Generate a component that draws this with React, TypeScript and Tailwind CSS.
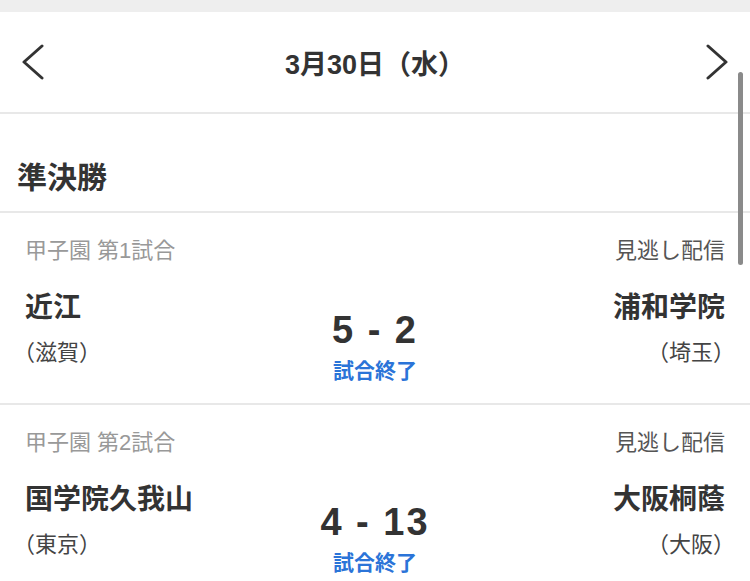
import React from "react";

type Game = {
  label: string;
  home: string;
  homePref: string;
  away: string;
  awayPref: string;
  score: string;
};

const GAMES: Game[] = [
  { label: "甲子園 第1試合", home: "近江", homePref: "（滋賀）", away: "浦和学院", awayPref: "（埼玉）", score: "5 - 2" },
  { label: "甲子園 第2試合", home: "国学院久我山", homePref: "（東京）", away: "大阪桐蔭", awayPref: "（大阪）", score: "4 - 13" },
];

const font = { fontFamily: '"Liberation Sans", "Noto Sans CJK JP", sans-serif' };

const Chevron: React.FC<{ dir: "left" | "right" }> = ({ dir }) => (
  <svg width="24" height="36" viewBox="0 0 24 36" fill="none">
    <polyline
      points={dir === "left" ? "21,2 3,18 21,34" : "3,2 21,18 3,34"}
      stroke="#333"
      strokeWidth="3"
      strokeLinecap="round"
      strokeLinejoin="round"
    />
  </svg>
);

const App: React.FC = () => {
  return (
    <div className="relative w-[750px] h-[581px] overflow-hidden bg-white text-[#333]" style={font}>
      <div className="h-[12px] bg-[#eeeeee]" />

      {/* Date header */}
      <div className="flex items-center justify-between h-[102px] px-[21px] border-b-2 border-[#e8e8e8]">
        <Chevron dir="left" />
        <div className="text-[27px] font-bold pt-[6px]">3月30日（水）</div>
        <Chevron dir="right" />
      </div>

      {/* Section title */}
      <div className="h-[99px] px-[17px] pt-[46px] border-b-2 border-[#e8e8e8]">
        <h2 className="text-[30px] font-bold leading-[36px]">準決勝</h2>
      </div>

      {GAMES.map((g) => (
        <div key={g.label} className="h-[192px] px-[25px] pt-[24px] border-b-2 border-[#e8e8e8]">
          <div className="flex justify-between text-[22px] leading-[28px]">
            <span className="text-[#999]">{g.label}</span>
            <span className="text-[#555]">見逃し配信</span>
          </div>
          <div className="grid grid-cols-3 mt-[25px]">
            <div className="flex flex-col items-start">
              <div className="text-[28px] font-bold leading-[36px]">{g.home}</div>
              <div className="text-[22px] leading-[28px] mt-[13px] -ml-[12px] text-[#444]">{g.homePref}</div>
            </div>
            <div className="flex flex-col items-center mt-[20px]">
              <div className="text-[38px] font-bold leading-[40px] tracking-[2px]">{g.score}</div>
              <div className="text-[21px] font-bold leading-[26px] mt-[8px] text-[#2b74d8]">試合終了</div>
            </div>
            <div className="flex flex-col items-end">
              <div className="text-[28px] font-bold leading-[36px]">{g.away}</div>
              <div className="text-[22px] leading-[28px] mt-[13px] -mr-[10px] text-[#444]">{g.awayPref}</div>
            </div>
          </div>
        </div>
      ))}

      {/* scrollbar overlay */}
      <div className="absolute right-[7px] top-[72px] w-[5px] h-[193px] rounded-full bg-[#8a8a8a]" />
    </div>
  );
};

export default App;
